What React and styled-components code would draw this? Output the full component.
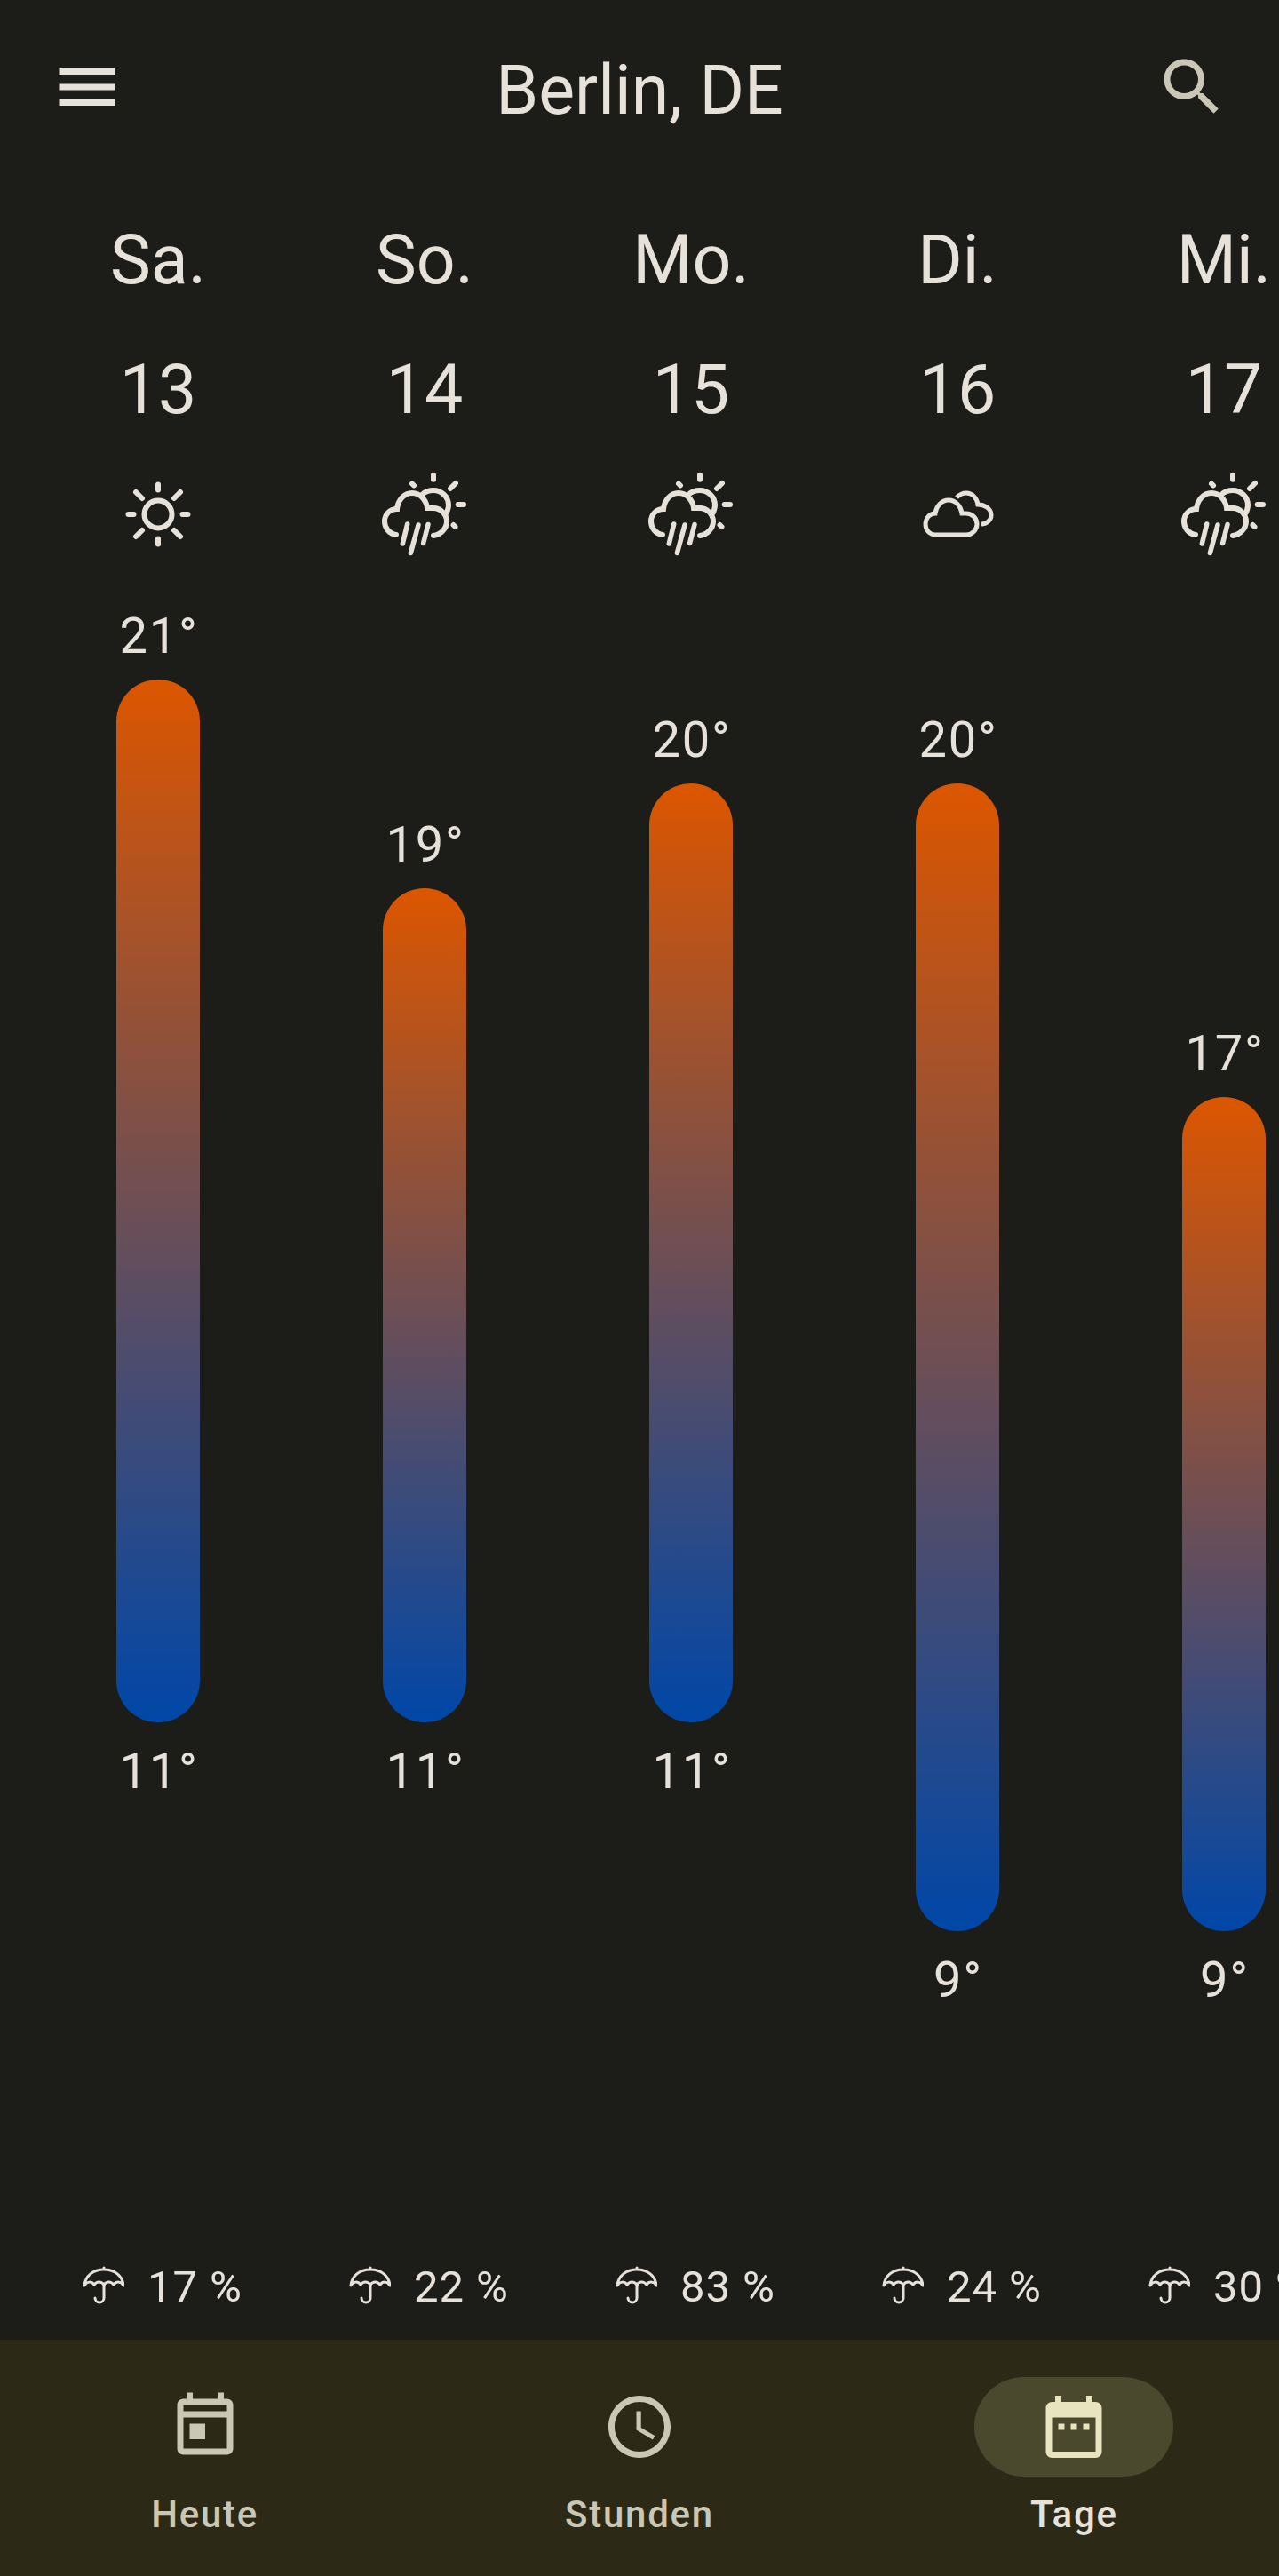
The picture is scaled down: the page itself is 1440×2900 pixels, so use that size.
import React from 'react'
import styled, { createGlobalStyle } from 'styled-components'

const DEGREE_PX = 117.4
const TOP_TEMP = 21

const days = [
  { name: 'Sa.', date: 13, icon: 'sun', high: 21, low: 11, rain: 17 },
  { name: 'So.', date: 14, icon: 'rain', high: 19, low: 11, rain: 22 },
  { name: 'Mo.', date: 15, icon: 'rain', high: 20, low: 11, rain: 83 },
  { name: 'Di.', date: 16, icon: 'cloud', high: 20, low: 9, rain: 24 },
  { name: 'Mi.', date: 17, icon: 'rain', high: 17, low: 9, rain: 30 }
]

const GlobalStyle = createGlobalStyle`
  html, body {
    margin: 0;
    padding: 0;
    background: #1c1d18;
  }
`

const Page = styled.div`
  display: flex;
  flex-direction: column;
  width: 1440px;
  height: 2900px;
  overflow: hidden;
  background: #1c1d18;
  color: #e6e2da;
  font-family: Roboto, "Liberation Sans", sans-serif;
`

const Header = styled.header`
  display: flex;
  align-items: center;
  justify-content: space-between;
  flex: 0 0 196px;
  padding: 0 56px;
`

const HeaderIcon = styled.svg`
  display: block;
  width: 84px;
  height: 84px;
  fill: ${props => props.$color};
`

const Title = styled.h1`
  margin: 7px 0 0;
  font-size: 77px;
  font-weight: 400;
  line-height: 98px;
`

const Days = styled.main`
  display: flex;
  flex: 1;
  min-height: 0;
  padding-left: 28px;
`

const Day = styled.section`
  display: flex;
  flex-direction: column;
  align-items: center;
  flex: 0 0 300px;
  padding: 48px 0 24px;
`

const DayName = styled.div`
  font-size: 77px;
  line-height: 98px;
`

const DayDate = styled.div`
  margin-top: 55px;
  font-size: 77px;
  line-height: 84px;
`

const WeatherIcon = styled.svg`
  display: block;
  flex: 0 0 110px;
  width: 120px;
  height: 110px;
  margin-top: 39px;
  fill: none;
  stroke: #e6e2da;
  stroke-linecap: round;
  stroke-width: ${props => props.$stroke || 6};
`

const Chart = styled.div`
  display: flex;
  flex-direction: column;
  align-items: center;
  flex: 1;
  padding-top: 51px;
`

const Temp = styled.div`
  padding-left: 2px;
  font-size: 56px;
  line-height: 70px;
  letter-spacing: 1.75px;
`

const Bar = styled.div`
  width: 94px;
  margin: ${props => (props.$gap ? '14px 0 20px' : 0)};
  border-radius: 47px;
  background: linear-gradient(180deg, #dc5600 0%, #0047a8 100%);
`

const Rain = styled.div`
  display: flex;
  align-items: center;
  align-self: stretch;
  height: 70px;
  padding-left: 52px;
`

const Umbrella = styled.svg`
  display: block;
  flex: 0 0 60px;
  width: 60px;
  height: 70px;
  fill: none;
  stroke: #e6e2da;
  stroke-width: 3;
  stroke-linecap: round;
  stroke-linejoin: round;
`

const RainText = styled.span`
  margin-left: 26px;
  font-size: 49px;
  line-height: 70px;
  letter-spacing: 0.9px;
  white-space: nowrap;
`

const Nav = styled.nav`
  display: flex;
  gap: 28px;
  flex: 0 0 266px;
  padding-top: 42px;
  box-sizing: border-box;
  background: #2c2a16;
`

const NavItem = styled.div`
  display: flex;
  flex-direction: column;
  align-items: center;
  flex: 1;
  color: ${props => (props.$active ? '#e6e2da' : '#cac7b5')};
`

const NavPill = styled.div`
  display: flex;
  align-items: center;
  justify-content: center;
  width: 224px;
  height: 112px;
  border-radius: 56px;
  background: ${props => (props.$active ? '#4a492e' : 'transparent')};
`

const NavIcon = styled.svg`
  display: block;
  width: 84px;
  height: 84px;
  fill: ${props => (props.$active ? '#e8e4bf' : '#cac7b5')};
`

const NavLabel = styled.div`
  margin-top: 15px;
  font-size: 42px;
  font-weight: 500;
  line-height: 56px;
  letter-spacing: 1.75px;
`

const Sun = () => (
  <WeatherIcon viewBox="0 0 120 110">
    <circle cx="60" cy="59" r="15.5" />
    <path d="M60 25.5V31.5M60 86.5V92.5M26.5 59H32.5M87.5 59H93.5M35 34L42 41M78 77L85 84M85 34L78 41M42 77L35 84" />
  </WeatherIcon>
)

const RainCloud = () => (
  <WeatherIcon viewBox="-2 0 120 110">
    <path d="M68 14.7V19.7M93 24L87 30M95.7 48H102M90.5 71L92.5 73M44 24.5L46 26.5" />
    <path d="M55 37C59 33 63 32 68 32C77 32 85 39 85 49C85 52 84 54 83 57" />
    <path d="M26 82C18 81 13 74 13 67C13 59 19 53 27 53C28 43 35 35 44 35C53 35 60 43 61 52C62 52 64 52 68 52C76 52 83 59 83 67C83 75 76 82 68 83" />
    <path strokeWidth="5.5" d="M38.7 70L33.3 92M51 71L42.4 102.5M62 70.5L56.6 91.5" />
  </WeatherIcon>
)

const Clouds = () => (
  <WeatherIcon viewBox="-2 -10 120 110" $stroke={5}>
    <path d="M33 72H68C75 72 80 66 80 60C80 53 74 48 68 48H63C62 40 56 33 48 33C40 33 34 40 33 48C27 48 22 53 22 60C22 67 27 72 33 72Z" />
    <path strokeLinecap="butt" d="M57 30C60 27 64 25 68 25C75 25 80 31 81 38C88 38 96 42 96 50C96 56 90 60 85 60" />
  </WeatherIcon>
)

const weatherIcons = { sun: Sun, rain: RainCloud, cloud: Clouds }

const UmbrellaIcon = () => (
  <Umbrella viewBox="0 10 60 70">
    <path d="M37 23V25M15 43C16 32 25 25 37 25C49 25 58 32 59 43C56 38 51 38 48 42C45 38 40 38 37 42C34 38 29 38 26 42C23 38 18 38 15 43Z" />
    <path d="M37 42V57A5 5 0 0 1 27 57" />
  </Umbrella>
)

const App = () => (
  <Page>
    <GlobalStyle />
    <Header>
      <HeaderIcon viewBox="0 0 24 24" $color="#e6e2da">
        <path d="M3 18h18v-2H3v2zm0-5h18v-2H3v2zm0-7v2h18V6H3z" />
      </HeaderIcon>
      <Title>Berlin, DE</Title>
      <HeaderIcon viewBox="0 0 24 24" $color="#cac7b5">
        <path d="M15.5 14h-.79l-.28-.27C15.41 12.59 16 11.11 16 9.5 16 5.91 13.09 3 9.5 3S3 5.91 3 9.5 5.91 16 9.5 16c1.61 0 3.09-.59 4.23-1.57l.27.28v.79l5 4.99L20.49 19l-4.99-5zm-6 0C7.01 14 5 11.99 5 9.5S7.01 5 9.5 5 14 7.01 14 9.5 11.99 14 9.5 14z" />
      </HeaderIcon>
    </Header>

    <Days>
      {days.map(day => {
        const Icon = weatherIcons[day.icon]
        return (
          <Day key={day.date}>
            <DayName>{day.name}</DayName>
            <DayDate>{day.date}</DayDate>
            <Icon />
            <Chart>
              <div style={{ height: (TOP_TEMP - day.high) * DEGREE_PX }} />
              <Temp>{day.high}°</Temp>
              <Bar $gap style={{ height: (day.high - day.low) * DEGREE_PX }} />
              <Temp>{day.low}°</Temp>
            </Chart>
            <Rain>
              <UmbrellaIcon />
              <RainText>{day.rain} %</RainText>
            </Rain>
          </Day>
        )
      })}
    </Days>

    <Nav>
      <NavItem>
        <NavPill>
          <NavIcon viewBox="0 0 24 24">
            <path d="M19 3h-1V1h-2v2H8V1H6v2H5c-1.1 0-2 .9-2 2v14c0 1.1.9 2 2 2h14c1.1 0 2-.9 2-2V5c0-1.1-.9-2-2-2zm0 16H5V9h14v10zm0-12H5V5h14v2zM7 11h5v5H7z" />
          </NavIcon>
        </NavPill>
        <NavLabel>Heute</NavLabel>
      </NavItem>
      <NavItem>
        <NavPill>
          <NavIcon viewBox="0 0 24 24">
            <path d="M11.99 2C6.47 2 2 6.48 2 12s4.47 10 9.99 10C17.52 22 22 17.52 22 12S17.52 2 11.99 2zM12 20c-4.42 0-8-3.58-8-8s3.58-8 8-8 8 3.58 8 8-3.58 8-8 8zm.5-13H11v6l5.25 3.15.75-1.23-4.5-2.67z" />
          </NavIcon>
        </NavPill>
        <NavLabel>Stunden</NavLabel>
      </NavItem>
      <NavItem $active>
        <NavPill $active>
          <NavIcon $active viewBox="0 0 24 24">
            <path d="M19 4h-1V2h-2v2H8V2H6v2H5c-1.1 0-2 .9-2 2v14c0 1.1.9 2 2 2h14c1.1 0 2-.9 2-2V6c0-1.1-.9-2-2-2zm0 16H5V9h14v11zM9 13H7v-2h2v2zm4 0h-2v-2h2v2zm4 0h-2v-2h2v2z" />
          </NavIcon>
        </NavPill>
        <NavLabel>Tage</NavLabel>
      </NavItem>
    </Nav>
  </Page>
)

export default App
